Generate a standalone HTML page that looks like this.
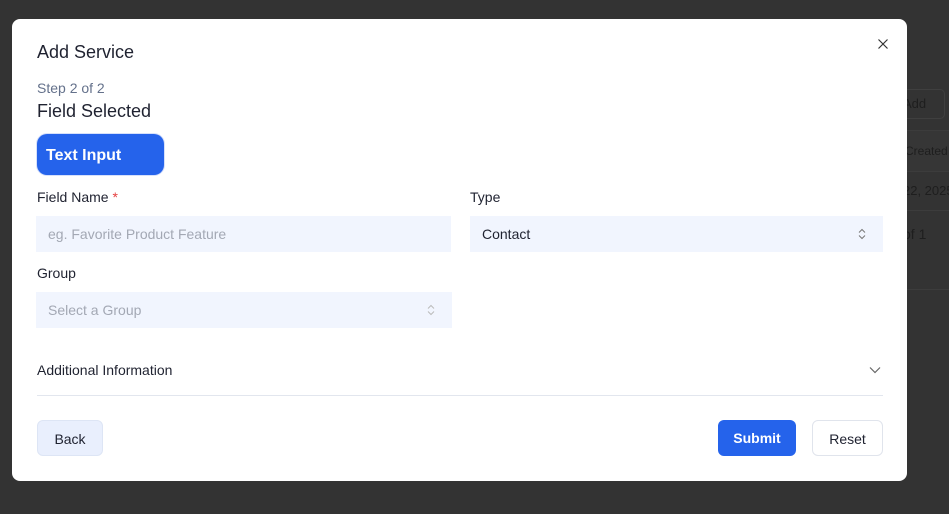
<!DOCTYPE html>
<html><head><style>
*{box-sizing:border-box;margin:0;padding:0}
body{width:949px;height:514px;background:#333;font-family:"Liberation Sans",sans-serif;position:relative;overflow:hidden;color:#1f2230}
.bg{position:absolute;color:#222;font-size:13px;white-space:nowrap}
.line{position:absolute;left:890px;width:59px;height:1px;background:#3c3c3c}
.modal{position:absolute;left:12px;top:19px;width:895px;height:462px;background:#fff;border-radius:8px}
.a{position:absolute;white-space:nowrap}
.input{position:absolute;height:36px;background:#f1f5fe;font-size:14px;padding-left:12px;line-height:36px;color:#a3a8b4}
.lbl{position:absolute;font-size:14px;color:#1f2230}
.btn{position:absolute;height:36px;border-radius:6px;font-size:14px;text-align:center;line-height:36px}
</style></head><body>
<div style="position:absolute;left:893px;top:89px;width:52px;height:30px;border:1px solid #3f3f3f;border-radius:5px"></div>
<div class="bg" style="left:903px;top:96px;color:#1e1e1e">Add</div>
<div style="position:absolute;left:890px;top:130px;width:59px;height:42px;background:#363636"></div>
<div class="line" style="top:130px"></div>
<div class="line" style="top:171px"></div>
<div class="line" style="top:210px"></div>
<div class="line" style="top:289px"></div>
<div class="bg" style="left:905px;top:144px;font-size:12px;color:#1e1e1e">Created</div>
<div class="bg" style="left:903px;top:183px;color:#1e1e1e">22, 2025</div>
<div class="bg" style="left:903px;top:226px;font-size:14px;color:#1e1e1e">of 1</div>
<div class="modal">
<div class="a" style="left:25px;top:23px;font-size:18px;color:#1f2230">Add Service</div>
<svg class="a" style="left:865px;top:19px" width="12" height="12" viewBox="0 0 12 12"><path d="M1.5 1.5L10.5 10.5M10.5 1.5L1.5 10.5" stroke="#333" stroke-width="1.2"/></svg>
<div class="a" style="left:25px;top:61px;font-size:14px;color:#64718b">Step 2 of 2</div>
<div class="a" style="left:25px;top:82px;font-size:18px;color:#1f2230">Field Selected</div>
<div class="btn" style="left:25px;top:115px;width:127px;height:41px;line-height:43px;background:#2563eb;color:#fff;font-weight:bold;font-size:16px;border-radius:10px;text-align:left;padding-left:9px;box-shadow:0 0 0 1px #d6e0fb">Text Input</div>
<div class="lbl" style="left:25px;top:170px">Field Name <span style="color:#e53e3e">*</span></div>
<div class="input" style="left:24px;top:197px;width:415px">eg. Favorite Product Feature</div>
<div class="lbl" style="left:458px;top:170px">Type</div>
<div class="input" style="left:458px;top:197px;width:413px;color:#1f2230">Contact
<svg style="position:absolute;right:17px;top:12px" width="8" height="12" viewBox="0 0 8 12"><path d="M1 4.5L4 1.5L7 4.5M1 7.5L4 10.5L7 7.5" stroke="#777" fill="none"/></svg></div>
<div class="lbl" style="left:25px;top:246px">Group</div>
<div class="input" style="left:24px;top:273px;width:416px">Select a Group
<svg style="position:absolute;right:17px;top:12px" width="8" height="12" viewBox="0 0 8 12"><path d="M1 4.5L4 1.5L7 4.5M1 7.5L4 10.5L7 7.5" stroke="#bbb" fill="none"/></svg></div>
<div class="lbl" style="left:25px;top:343px">Additional Information</div>
<svg class="a" style="left:857px;top:347px" width="12" height="8" viewBox="0 0 12 8"><path d="M1 1.5L6 6.5L11 1.5" stroke="#666" fill="none" stroke-width="1.2"/></svg>
<div class="a" style="left:25px;top:376px;width:846px;height:1px;background:#e2e6ee"></div>
<div class="btn" style="left:25px;top:401px;width:66px;background:#e9effd;border:1px solid #dde5f5;color:#1f2230">Back</div>
<div class="btn" style="left:706px;top:401px;width:78px;background:#2563eb;color:#fff;font-weight:bold">Submit</div>
<div class="btn" style="left:800px;top:401px;width:71px;background:#fff;border:1px solid #e0e4ec;color:#1f2230">Reset</div>
</div>
</body></html>
